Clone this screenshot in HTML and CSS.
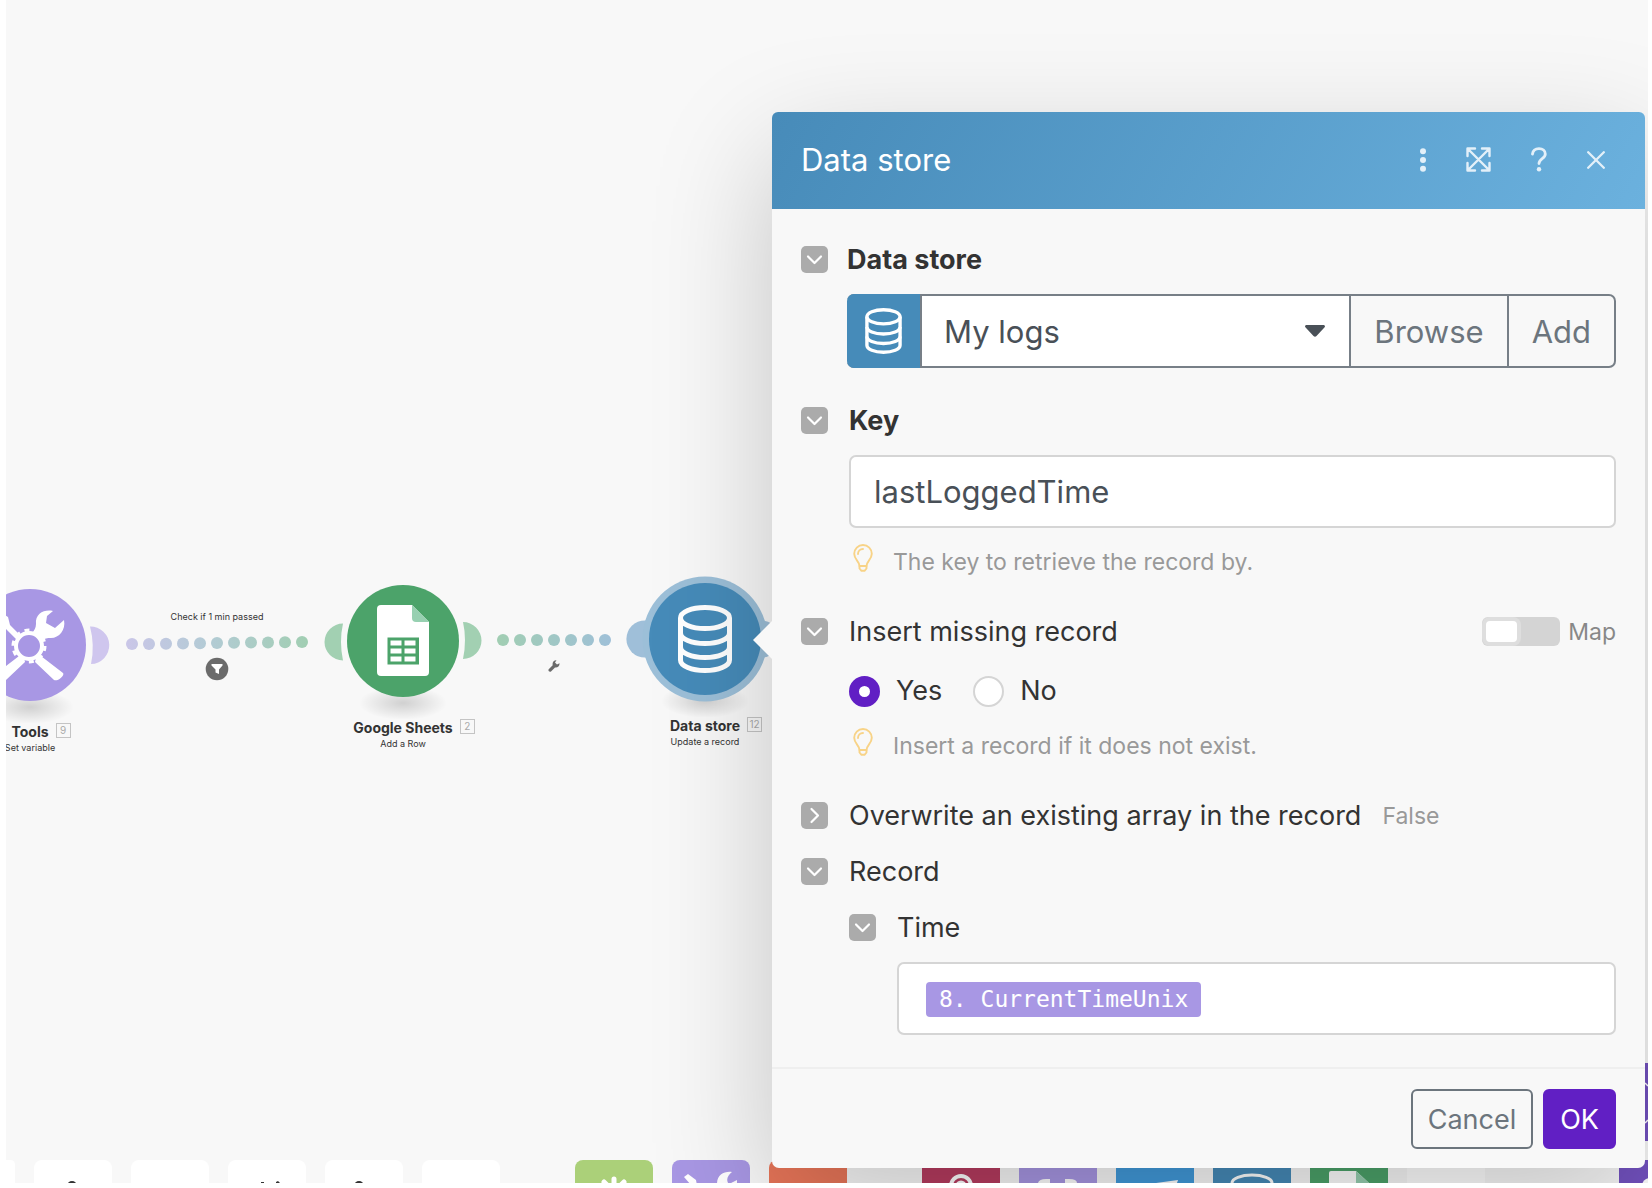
FILE: index.html
```html
<!DOCTYPE html>
<html lang="en">
<head>
<meta charset="utf-8">
<meta name="viewport" content="width=device-width, initial-scale=1">
<title>Scenario editor</title>
<link rel="stylesheet" href="styles.css">
</head>
<body>
<svg class="defs" aria-hidden="true">
  <defs>
    <linearGradient id="link-a" gradientUnits="userSpaceOnUse" x1="0" y1="0" x2="184" y2="0"><stop offset="0" stop-color="#cac6e8"/><stop offset=".45" stop-color="#b3cbd5"/><stop offset="1" stop-color="#a1ceb2"/></linearGradient>
    <linearGradient id="link-b" gradientUnits="userSpaceOnUse" x1="0" y1="0" x2="116" y2="0"><stop offset="0" stop-color="#a1ceb2"/><stop offset="1" stop-color="#9fc0d8"/></linearGradient>
    <radialGradient id="ground"><stop offset="0" stop-color="#000" stop-opacity=".16"/><stop offset=".5" stop-color="#000" stop-opacity=".08"/><stop offset="1" stop-color="#000" stop-opacity="0"/></radialGradient>
    <symbol id="chevron" viewBox="0 0 27 27"><path d="M7 10.500l6.500 6.500 6.500-6.500" fill="none" stroke="#fff" stroke-width="2.200" stroke-linecap="round" stroke-linejoin="round"/></symbol>
    <symbol id="bulb" viewBox="0 0 20 28"><g fill="none" stroke="#f8d387" stroke-width="1.900" stroke-linecap="round" stroke-linejoin="round"><path d="M6.500 22C6.500 17.500 1.200 15.500 1.200 9.800a8.800 8.800 0 0 1 17.600 0C18.800 15.500 13.500 17.500 13.500 22z"/><path d="M5 10a5 5 0 0 1 5-5M6.500 22v2.500l2 2.300h3l2-2.300V22"/></g></symbol>
    <symbol id="database" viewBox="0 0 54 68"><g fill="none" stroke="#fff" stroke-width="5"><ellipse cx="27" cy="13" rx="24.500" ry="10.500"/><path d="M2.500 13v42c0 6 11 10.500 24.500 10.500S51.500 61 51.500 55V13"/><path d="M2.500 28c0 6 11 10.500 24.500 10.500S51.500 34 51.500 28M2.500 42c0 6 11 10.500 24.500 10.500S51.500 48 51.500 42"/></g></symbol>
    <symbol id="tools" viewBox="0 0 72 72">
      <g fill="#fff"><path d="M59 2C51 0 41 4 42 15c0 4-2 7-4 9l10 8c3-3 5-3 9-3 8 0 15-8 13-18l-9 8-9-5 1-7z"/><path d="M2 8l4-5 8 5 2 8 11 11-4 4L12 20l-7-3z"/><path d="M43 44l26 20c2 2-5 9-9 7L41 53zM29 44L3 64c-2 2 5 9 9 7L31 53z"/></g>
      <circle cx="35" cy="37" r="13" fill="#a897e4" stroke="#fff" stroke-width="4"/>
      <circle cx="35" cy="37" r="16" fill="none" stroke="#fff" stroke-width="3" stroke-dasharray="5 5.050"/>
    </symbol>
  </defs>
</svg>

<main class="workspace">
  <section class="stage" aria-label="Scenario">
    <article class="node node-tools">
      <svg class="node-art" viewBox="0 0 160 149" width="160" height="149">
        <ellipse cx="80" cy="133" rx="44" ry="17" fill="url(#ground)"/>
        <path d="M140 52.500q5 19 1 37.500A18.600 18.600 0 0 0 140 52.500z" fill="#cfc6ee"/>
        <circle cx="80" cy="71" r="56" fill="#a897e4"/>
        <use href="#tools" x="44" y="35" width="72" height="72"/>
      </svg>
      <h2 class="node-name">Tools <span class="node-id">9</span></h2>
      <p class="node-action">Set variable</p>
    </article>

    <div class="link link-first">
      <span class="link-label">Check if 1 min passed</span>
      <svg width="184" height="14" viewBox="0 0 184 14"><g fill="url(#link-a)"><circle cx="7" cy="8" r="6"/><circle cx="24" cy="8" r="6"/><circle cx="41" cy="7.700" r="6"/><circle cx="58" cy="7.500" r="6"/><circle cx="75" cy="7.300" r="6"/><circle cx="92" cy="7" r="6"/><circle cx="109" cy="6.800" r="6"/><circle cx="126" cy="6.600" r="6"/><circle cx="143" cy="6.400" r="6"/><circle cx="160" cy="6.200" r="6"/><circle cx="177" cy="6" r="6"/></g></svg>
      <svg class="link-tool" width="24" height="24" viewBox="0 0 24 24"><circle cx="12" cy="12" r="11.300" fill="#6b6b6b"/><path d="M6.500 7h11v1.500L14 12.500V17l-3.500-1.500v-3L6.500 8.500z" fill="#fff"/></svg>
    </div>

    <article class="node node-sheets">
      <svg class="node-art" viewBox="0 0 160 149" width="160" height="149">
        <ellipse cx="80" cy="133" rx="44" ry="17" fill="url(#ground)"/>
        <path d="M20 53.500q-4 18 0 37A18.500 18.500 0 0 1 20 53.500z" fill="#a2d0b2"/>
        <path d="M140 52q4 18 0 37A18.500 18.500 0 0 0 140 52z" fill="#a2d0b2"/>
        <circle cx="80" cy="71" r="56" fill="#4ca36a"/>
        <path d="M58 35h31l17 17v50a4 4 0 0 1-4 4H58a4 4 0 0 1-4-4V39a4 4 0 0 1 4-4z" fill="#fff"/>
        <path d="M89 35l17 17H93a4 4 0 0 1-4-4z" fill="#97d0b1"/>
        <path d="M64.500 67.500h31.500v27H64.500zM67.500 70.500v5h11v-5zm14 0v5h11v-5zm-14 8v5h11v-5zm14 0v5h11v-5zm-14 8v5h11v-5zm14 0v5h11v-5z" fill="#4ca36a" fill-rule="evenodd"/>
      </svg>
      <h2 class="node-name">Google Sheets <span class="node-id">2</span></h2>
      <p class="node-action">Add a Row</p>
    </article>

    <div class="link link-second">
      <svg width="116" height="14" viewBox="0 0 116 14"><g fill="url(#link-b)"><circle cx="7" cy="7" r="6"/><circle cx="24" cy="7" r="6"/><circle cx="41" cy="7" r="6"/><circle cx="58" cy="7" r="6"/><circle cx="75" cy="7" r="6"/><circle cx="92" cy="7" r="6"/><circle cx="109" cy="7" r="6"/></g></svg>
      <svg class="link-tool" width="12" height="24" viewBox="0 0 12 24"><path d="M8.500 6.200L7 8.500l2 2 2.500-1.300c.3 3-2 4.800-4.500 4.300l-4 4c-1.500 1-3.300-.8-2.300-2.300l4-3.900C4 8 6 6 8.500 6.200z" fill="#6b6b6b"/></svg>
    </div>

    <article class="node node-store">
      <svg class="node-art" viewBox="0 0 160 149" width="160" height="149">
        <ellipse cx="80" cy="133" rx="44" ry="17" fill="url(#ground)"/>
        <circle cx="20" cy="71" r="18.600" fill="#9fbfd9"/><circle cx="136" cy="71" r="18.600" fill="#9fbfd9"/>
        <circle cx="80" cy="71" r="62.500" fill="#9cbfd8"/>
        <circle cx="80" cy="71" r="56" fill="#468bb9"/>
        <use href="#database" x="53" y="37" width="54" height="68"/>
      </svg>
      <h2 class="node-name">Data store <span class="node-id">12</span></h2>
      <p class="node-action">Update a record</p>
    </article>
  </section>

  <nav class="dock" aria-label="Tools">
    <div class="dock-group">
      <span class="tile tile-edge"></span>
      <span class="tile"><svg viewBox="0 0 78 23"><circle cx="38" cy="26" r="5" fill="#333"/></svg></span>
      <span class="tile"></span>
      <span class="tile"><svg viewBox="0 0 78 23"><path d="M33 22h3v1h-3zM48 22l2-1 2 2h-4z" fill="#333"/></svg></span>
      <span class="tile"><svg viewBox="0 0 78 23"><circle cx="34" cy="26" r="5" fill="#333"/></svg></span>
      <span class="tile"></span>
    </div>
    <div class="dock-group">
      <span class="tile tile-lime"><svg viewBox="0 0 78 23"><path d="M39 19v12M29 22l8 8M49 22l-8 8" stroke="#fff" stroke-width="5" stroke-linecap="round"/></svg></span>
      <span class="tile tile-violet"><svg viewBox="0 0 78 23"><path d="M12 17l4-3 8 6 1 5h-6z" fill="#fff"/><path d="M60 12c-8-1-15 3-15 12h20v-4l-6 3h-3c-2-4 0-8 4-11z" fill="#fff"/></svg></span>
      <span class="tile tile-orange"></span>
    </div>
    <div class="dock-group">
      <span class="tile tile-wine"><svg viewBox="0 0 78 23"><g fill="none" stroke="#fff" stroke-width="4"><circle cx="39" cy="26" r="10"/><circle cx="39" cy="26" r="4" stroke-width="3"/></g></svg></span>
      <span class="tile tile-violet"><svg viewBox="0 0 78 23"><path d="M19 23q1-4 8-4h4v4zM58 23q0-4-8-4h-4v4z" fill="#fff"/></svg></span>
      <span class="tile tile-sky"><svg viewBox="0 0 78 23"><path d="M40 23l22-3-1 3z" fill="#fff"/></svg></span>
      <span class="tile tile-blue"><svg viewBox="0 0 78 23"><ellipse cx="39" cy="23" rx="20" ry="8" fill="none" stroke="#fff" stroke-width="3"/></svg></span>
      <span class="tile tile-green"><svg viewBox="0 0 78 23"><path d="M19 23V13q0-2 2-2h25l13 12z" fill="#fff"/><path d="M46 11l13 12H46z" fill="#97d0b1"/></svg></span>
      <span class="tile tile-blank"></span>
    </div>
  </nav>

  <span class="help-tab"><svg viewBox="0 0 3 78" width="3" height="78"><path d="M0 20l3 3M0 60l3-3" stroke="#fff" stroke-width="1.500"/></svg></span>
  <span class="chat-tab"><svg viewBox="0 0 29 23" width="29" height="23"><circle cx="31" cy="26" r="8" fill="#fff"/></svg></span>

  <form class="dialog" aria-labelledby="dialog-title">
    <header class="dialog-head">
      <h1 class="dialog-title" id="dialog-title">Data store</h1>
      <div class="dialog-tools">
        <button type="button" class="icon-button" aria-label="More"><svg width="6" height="24" viewBox="0 0 6 24"><g fill="#e3f0f9"><circle cx="3" cy="3.300" r="3"/><circle cx="3" cy="12" r="3"/><circle cx="3" cy="20.700" r="3"/></g></svg></button>
        <button type="button" class="icon-button" aria-label="Expand"><svg width="25" height="25" viewBox="0 0 25 25"><path d="M1.500 9V1.500H9M16 1.500h7.500V9M23.500 16v7.500H16M9 23.500H1.500V16M2 2l21 21M23 2L2 23" fill="none" stroke="#e3f0f9" stroke-width="2.400" stroke-linecap="round" stroke-linejoin="round"/></svg></button>
        <button type="button" class="icon-button" aria-label="Help"><svg width="16" height="25" viewBox="0 0 16 25"><path d="M1.500 7C2 3.500 4.500 1.700 8 1.700c3.700 0 6.300 2.100 6.300 5.300C14.300 11.800 8 11.500 8 16.500" fill="none" stroke="#e3f0f9" stroke-width="2.800" stroke-linecap="round"/><circle cx="8" cy="22.200" r="2.200" fill="#e3f0f9"/></svg></button>
        <button type="button" class="icon-button" aria-label="Close"><svg width="18" height="18" viewBox="0 0 18 18"><path d="M1.200 1.200l15.600 15.600M16.800 1.200L1.200 16.800" stroke="#e3f0f9" stroke-width="2.300" stroke-linecap="round"/></svg></button>
      </div>
    </header>

    <div class="dialog-body">
      <section class="field compact">
        <div class="field-head">
          <button type="button" class="toggle" aria-label="Collapse Data store"><svg><use href="#chevron"/></svg></button>
          <label class="label strong" for="store">Data store</label>
        </div>
        <div class="field-content combo">
          <span class="combo-icon"><svg width="37" height="46"><use href="#database"/></svg></span>
          <span class="combo-select">
            <select id="store"><option>My logs</option></select>
            <svg class="caret" width="20" height="12" viewBox="0 0 20 12"><path d="M1.800 0h16.400c1.800 0 2.300 1.500 1.200 2.600L11.500 11c-1 1-2 1-3 0L.6 2.600C-.5 1.500 0 0 1.800 0z" fill="#495057"/></svg>
          </span>
          <button type="button" class="combo-button">Browse</button>
          <button type="button" class="combo-button">Add</button>
        </div>
      </section>

      <section class="field">
        <div class="field-head">
          <button type="button" class="toggle" aria-label="Collapse Key"><svg><use href="#chevron"/></svg></button>
          <label class="label strong" for="key">Key</label>
        </div>
        <div class="field-content">
          <input class="text-box" id="key" type="text" value="lastLoggedTime">
          <p class="hint"><svg width="20" height="28"><use href="#bulb"/></svg><span>The key to retrieve the record by.</span></p>
        </div>
      </section>

      <section class="field">
        <div class="field-head">
          <button type="button" class="toggle" aria-label="Collapse Insert missing record"><svg><use href="#chevron"/></svg></button>
          <span class="label" id="insert-label">Insert missing record</span>
          <label class="map"><input type="checkbox" class="switch">Map</label>
        </div>
        <div class="field-content">
          <div class="radios" role="radiogroup" aria-labelledby="insert-label">
            <label class="choice"><input type="radio" name="insert" checked>Yes</label>
            <label class="choice"><input type="radio" name="insert">No</label>
          </div>
          <p class="hint"><svg width="20" height="28"><use href="#bulb"/></svg><span>Insert a record if it does not exist.</span></p>
        </div>
      </section>

      <div class="group">
        <section class="field-head">
          <button type="button" class="toggle closed" aria-label="Expand Overwrite an existing array"><svg><use href="#chevron"/></svg></button>
          <span class="label">Overwrite an existing array in the record</span>
          <span class="value">False</span>
        </section>
        <section class="field-head">
          <button type="button" class="toggle" aria-label="Collapse Record"><svg><use href="#chevron"/></svg></button>
          <span class="label">Record</span>
        </section>
        <section class="field nested">
          <div class="field-head">
            <button type="button" class="toggle" aria-label="Collapse Time"><svg><use href="#chevron"/></svg></button>
            <label class="label" for="time">Time</label>
          </div>
          <div class="field-content text-box chip-box">
            <span class="chip">8. CurrentTimeUnix</span>
            <input id="time" type="text">
          </div>
        </section>
      </div>
    </div>

    <footer class="dialog-foot">
      <button type="button" class="button">Cancel</button>
      <button type="submit" class="button primary">OK</button>
    </footer>
  </form>
</main>
</body>
</html>
```
FILE: styles.css
```css
* {
  box-sizing: border-box;
}

body {
  margin: 0;
  padding: 0 4px 5px 6px;
  min-height: 100vh;
  display: flex;
  background: #fff;
  color: #333;
  font-family: Inter, "Liberation Sans", sans-serif;
}

button,
input,
select {
  font: inherit;
  color: inherit;
  margin: 0;
}

h1,
h2,
p {
  margin: 0;
}

svg {
  display: block;
}

.defs {
  position: absolute;
  width: 0;
  height: 0;
}

.workspace {
  position: relative;
  flex: 1;
  min-width: 0;
  display: flex;
  flex-direction: column;
  overflow: hidden;
  background: #f8f8f8;
}

/* Canvas with freely placed modules */

.stage {
  position: relative;
  flex: 1;
}

.node {
  position: absolute;
  width: 160px;
  text-align: center;
}

.node-tools {
  left: -56px;
  top: 574px;
}

.node-sheets {
  left: 317px;
  top: 570px;
}

.node-store {
  left: 619px;
  top: 568px;
}

.node-name {
  position: relative;
  width: max-content;
  margin: 0 auto;
  font-size: 14px;
  line-height: 18px;
  font-weight: 700;
}

.node-id {
  position: absolute;
  left: calc(100% + 7px);
  top: 0;
  min-width: 15px;
  border: 1px solid #c4c4c4;
  font-size: 10px;
  line-height: 13px;
  font-weight: 400;
  color: #aaa;
}

.node-action {
  font-size: 9px;
  line-height: 14px;
}

.link {
  position: absolute;
  display: flex;
  flex-direction: column;
  align-items: center;
}

.link-first {
  left: 119px;
  top: 610px;
}

.link-second {
  left: 490px;
  top: 633px;
}

.link-label {
  font-size: 9px;
  line-height: 14px;
  margin-bottom: 12px;
}

.link-tool {
  margin-top: 7px;
}

.dock {
  display: flex;
  gap: 75px;
  height: 23px;
  overflow: hidden;
}

.dock-group {
  display: flex;
  flex: none;
  gap: 19px;
}

.tile {
  width: 78px;
  height: 78px;
  border-radius: 8px;
  background: #fff;
}

.tile-edge {
  width: 9px;
  border-top-left-radius: 0;
}

.tile-lime { background: #abd079; }
.tile-violet { background: #a897e4; }
.tile-orange { background: #e97659; }
.tile-wine { background: #b83c60; }
.tile-sky { background: #419adb; }
.tile-blue { background: #468bb9; }
.tile-green { background: #4ca36a; }
.tile-blank { background: #fff; }

.help-tab,
.chat-tab {
  position: absolute;
  right: 0;
  background: #7352c0;
}

.help-tab {
  top: 1063px;
}

.chat-tab {
  bottom: 0;
  border-top-left-radius: 8px;
}

/* Module settings dialog */

.dialog {
  position: absolute;
  top: 112px;
  right: 3px;
  width: 873px;
  max-width: 100%;
  border-radius: 7px;
  background: #f8f8f8;
  box-shadow: 0 42px 120px rgba(0, 0, 0, .21);
}

.dialog::before {
  content: "";
  position: absolute;
  left: -19px;
  top: 509px;
  border: 19px solid transparent;
  border-left: 0;
  border-right-color: #f8f8f8;
}

.dialog-head {
  display: flex;
  align-items: center;
  justify-content: space-between;
  height: 97px;
  padding: 0 40px 2px 29px;
  border-radius: 6px 6px 0 0;
  background: linear-gradient(120deg, #478bb9, #6bb1de);
  color: #fff;
}

.dialog-title {
  font-size: 31px;
  line-height: 40px;
  font-weight: 400;
}

.dialog-tools {
  display: flex;
  align-items: center;
  gap: 40px;
}

.icon-button {
  padding: 0;
  border: 0;
  background: none;
}

.dialog-body {
  display: flex;
  flex-direction: column;
  gap: 35px;
  padding: 33px 29px 32px;
}

.field-head {
  display: flex;
  align-items: center;
  gap: 21px;
}

.toggle {
  flex: none;
  width: 27px;
  height: 27px;
  padding: 0;
  border: 0;
  border-radius: 5px;
  background: #ababab;
}

.toggle svg {
  width: 27px;
  height: 27px;
}

.toggle.closed svg {
  transform: rotate(-90deg);
}

.label {
  padding-top: 1px;
  font-size: 27px;
  line-height: 34px;
}

.strong {
  font-weight: 700;
}

.value {
  font-size: 23px;
  line-height: 34px;
  color: #999;
}

.field-content {
  margin: 17px 0 0 48px;
}

.compact .field-head {
  gap: 19px;
}

.compact .field-content {
  margin-left: 46px;
}

.combo {
  display: flex;
  height: 74px;
  border: 2px solid #777f87;
  border-left: 0;
  border-radius: 7px;
}

.combo-icon {
  display: flex;
  align-items: center;
  justify-content: center;
  width: 73px;
  margin: -2px 0;
  border-radius: 7px 0 0 7px;
  background: #468bb9;
}

.combo-select {
  position: relative;
  flex: 1;
  border-left: 2px solid #777f87;
}

.combo-select select {
  appearance: none;
  width: 100%;
  height: 100%;
  padding: 0 60px 0 22px;
  border: 0;
  background: #fff;
  color: #495057;
  font-size: 31px;
}

.caret {
  position: absolute;
  right: 24px;
  top: 29px;
  pointer-events: none;
}

.combo-button {
  padding: 0 23px;
  border: 0;
  border-left: 2px solid #777f87;
  background: none;
  color: #6c757d;
  font-size: 31px;
}

.text-box {
  display: block;
  width: 100%;
  height: 73px;
  padding: 0 23px;
  border: 2px solid #d5d5d5;
  border-radius: 7px;
  background: #fff;
  color: #495057;
  font-size: 31px;
}

.hint {
  display: flex;
  gap: 20px;
  margin-top: 16px;
  padding-left: 4px;
  font-size: 23px;
  line-height: 34px;
  color: #999;
}

.hint span {
  padding-top: 1px;
}

.map {
  display: flex;
  align-items: center;
  gap: 8px;
  margin-left: auto;
  font-size: 23px;
  line-height: 34px;
  color: #888;
}

.switch {
  appearance: none;
  width: 78px;
  height: 29px;
  padding: 4px;
  border-radius: 6px;
  background: #d4d4d4;
}

.switch::before {
  content: "";
  display: block;
  width: 31px;
  height: 21px;
  border-radius: 4px;
  background: #fff;
  box-shadow: 0 0 0 4px #dedede;
}

.radios {
  display: flex;
  gap: 31px;
  padding-top: 8px;
}

.choice {
  display: flex;
  align-items: center;
  gap: 16px;
  font-size: 27px;
  line-height: 34px;
}

.choice input {
  appearance: none;
  width: 31px;
  height: 31px;
  border: 2px solid #d5d5d5;
  border-radius: 50%;
  background: #fff;
}

.choice input:checked {
  border: 10px solid #611fc4;
}

.radios + .hint {
  margin-top: 20px;
}

.group {
  display: flex;
  flex-direction: column;
  gap: 21px;
}

.nested {
  padding-left: 48px;
}

.chip-box {
  display: flex;
  align-items: center;
  width: auto;
  padding: 2px 27px 0;
}

.chip {
  padding: 0 13px;
  border-radius: 4px;
  background: #a897e4;
  color: #fff;
  font-family: "DejaVu Sans Mono", monospace;
  font-size: 23px;
  line-height: 35px;
}

.chip-box input {
  flex: 1;
  min-width: 0;
  border: 0;
  outline: 0;
  background: none;
}

.dialog-foot {
  display: flex;
  justify-content: flex-end;
  gap: 10px;
  padding: 20px 29px 19px;
  border-top: 2px solid #efefef;
}

.button {
  height: 60px;
  padding: 0 15px;
  border: 2px solid #6c757d;
  border-radius: 6px;
  background: none;
  color: #6c757d;
  font-size: 27px;
}

.primary {
  border-color: #611fc4;
  background: #611fc4;
  color: #fff;
}
```
